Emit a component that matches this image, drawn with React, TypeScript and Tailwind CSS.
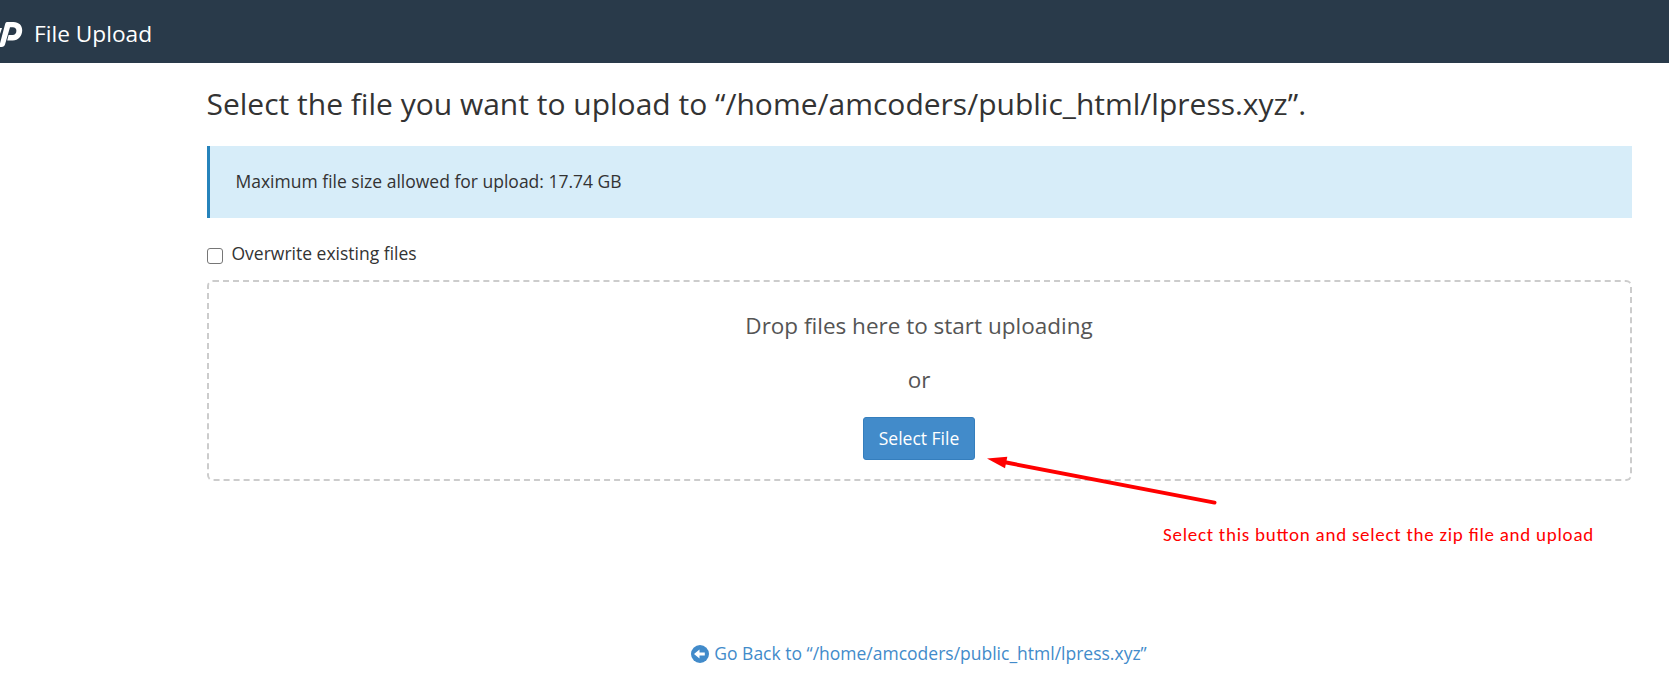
const PATH = "/home/amcoders/public_html/lpress.xyz";

function Logo() {
  return (
    <svg className="mt-[21px] h-[26px] w-[23px] shrink-0" viewBox="0 0 23 26" fill="#fff" aria-hidden="true">
      <path d="M0 7H2L0 13Z" />
      <path d="M7 1H13.500C19 1 22.200 4.600 22.200 9.200C22.200 15 18.200 19.500 12.800 19.500H7.200L8.600 14H12.600C15 14 16.400 12 16.400 9.700C16.400 7.700 15 6.300 12.800 6.300H10L5 23.500C4.500 25 3.500 26 1.500 26H0V22.500L5 3.500C5.400 2 5.800 1 7 1Z" />
    </svg>
  );
}

function BackIcon() {
  return (
    <svg className="mr-[5px] h-[18px] w-[18px]" viewBox="0 0 18 18" aria-hidden="true">
      <circle cx="9" cy="9" r="9" fill="#428bca" />
      <path d="M3 9L8.500 4.500V7.400H13.800V10.600H8.500V13.500Z" fill="#fff" />
    </svg>
  );
}

function Annotation() {
  return (
    <>
      <svg
        className="pointer-events-none absolute left-[980px] top-[450px] h-[60px] w-[245px]"
        viewBox="980 450 245 60"
        aria-hidden="true"
      >
        <path d="M1005 462.300L1214.500 502.600" stroke="#f00" strokeWidth="4" strokeLinecap="round" />
        <path d="M987 458.500L1007.300 456.700L1005 468.200Z" fill="#f00" />
      </svg>
      <p className="absolute left-[1163px] top-[522px] whitespace-nowrap font-['Carlito','Lato',sans-serif] text-[19px] leading-[26px] tracking-[0.740px] text-[#f00] [font-feature-settings:'liga'_1]">
        Select this button and select the zip file and upload
      </p>
    </>
  );
}

export default function App() {
  return (
    <div className="relative h-[675px] w-full overflow-hidden bg-white font-['Open_Sans',sans-serif] text-[17.500px] leading-[25px] text-[#333]">
      <header className="flex h-[63px] bg-[#293a4a]">
        <Logo />
        <span className="ml-[11px] mt-[18px] text-[22.700px] leading-[32px] text-white">File Upload</span>
      </header>
      <main className="ml-[207px] w-[1425px]">
        <h1 className="-ml-[0.5px] pt-[24px] text-[30px] leading-[33px]">Select the file you want to upload to “{PATH}”.</h1>
        <div className="mt-[26px] flex h-[72px] items-center border-l-[3px] border-[#2683bb] bg-[#d7edf9] pb-[2px] pl-[25.500px]">
          Maximum file size allowed for upload: 17.74 GB
        </div>
        <label className="mt-[23px] flex h-[25px]">
          <input
            type="checkbox"
            className="mr-[8.500px] mt-[7px] h-4 w-4 appearance-none rounded-[3px] border border-[#767676] bg-white"
          />
          Overwrite existing files
        </label>
        <section className="mt-[14px] flex h-[201px] flex-col items-center rounded-[6px] border-2 border-dashed border-[#ccc] pr-px pt-[28px] text-[22.500px] leading-[32px] text-[#555]">
          <p>Drop files here to start uploading</p>
          <p className="mt-[22px]">or</p>
          <button className="mt-[21px] h-[43px] w-[112px] rounded-[3px] border border-[#357ebd] bg-[#428bca] text-[17.500px] leading-[25px] text-white">
            Select File
          </button>
        </section>
        <div className="mt-[160px] flex items-center justify-center pr-px text-[#428bca]">
          <BackIcon />
          <a>Go Back to “{PATH}”</a>
        </div>
      </main>
      <Annotation />
    </div>
  );
}
